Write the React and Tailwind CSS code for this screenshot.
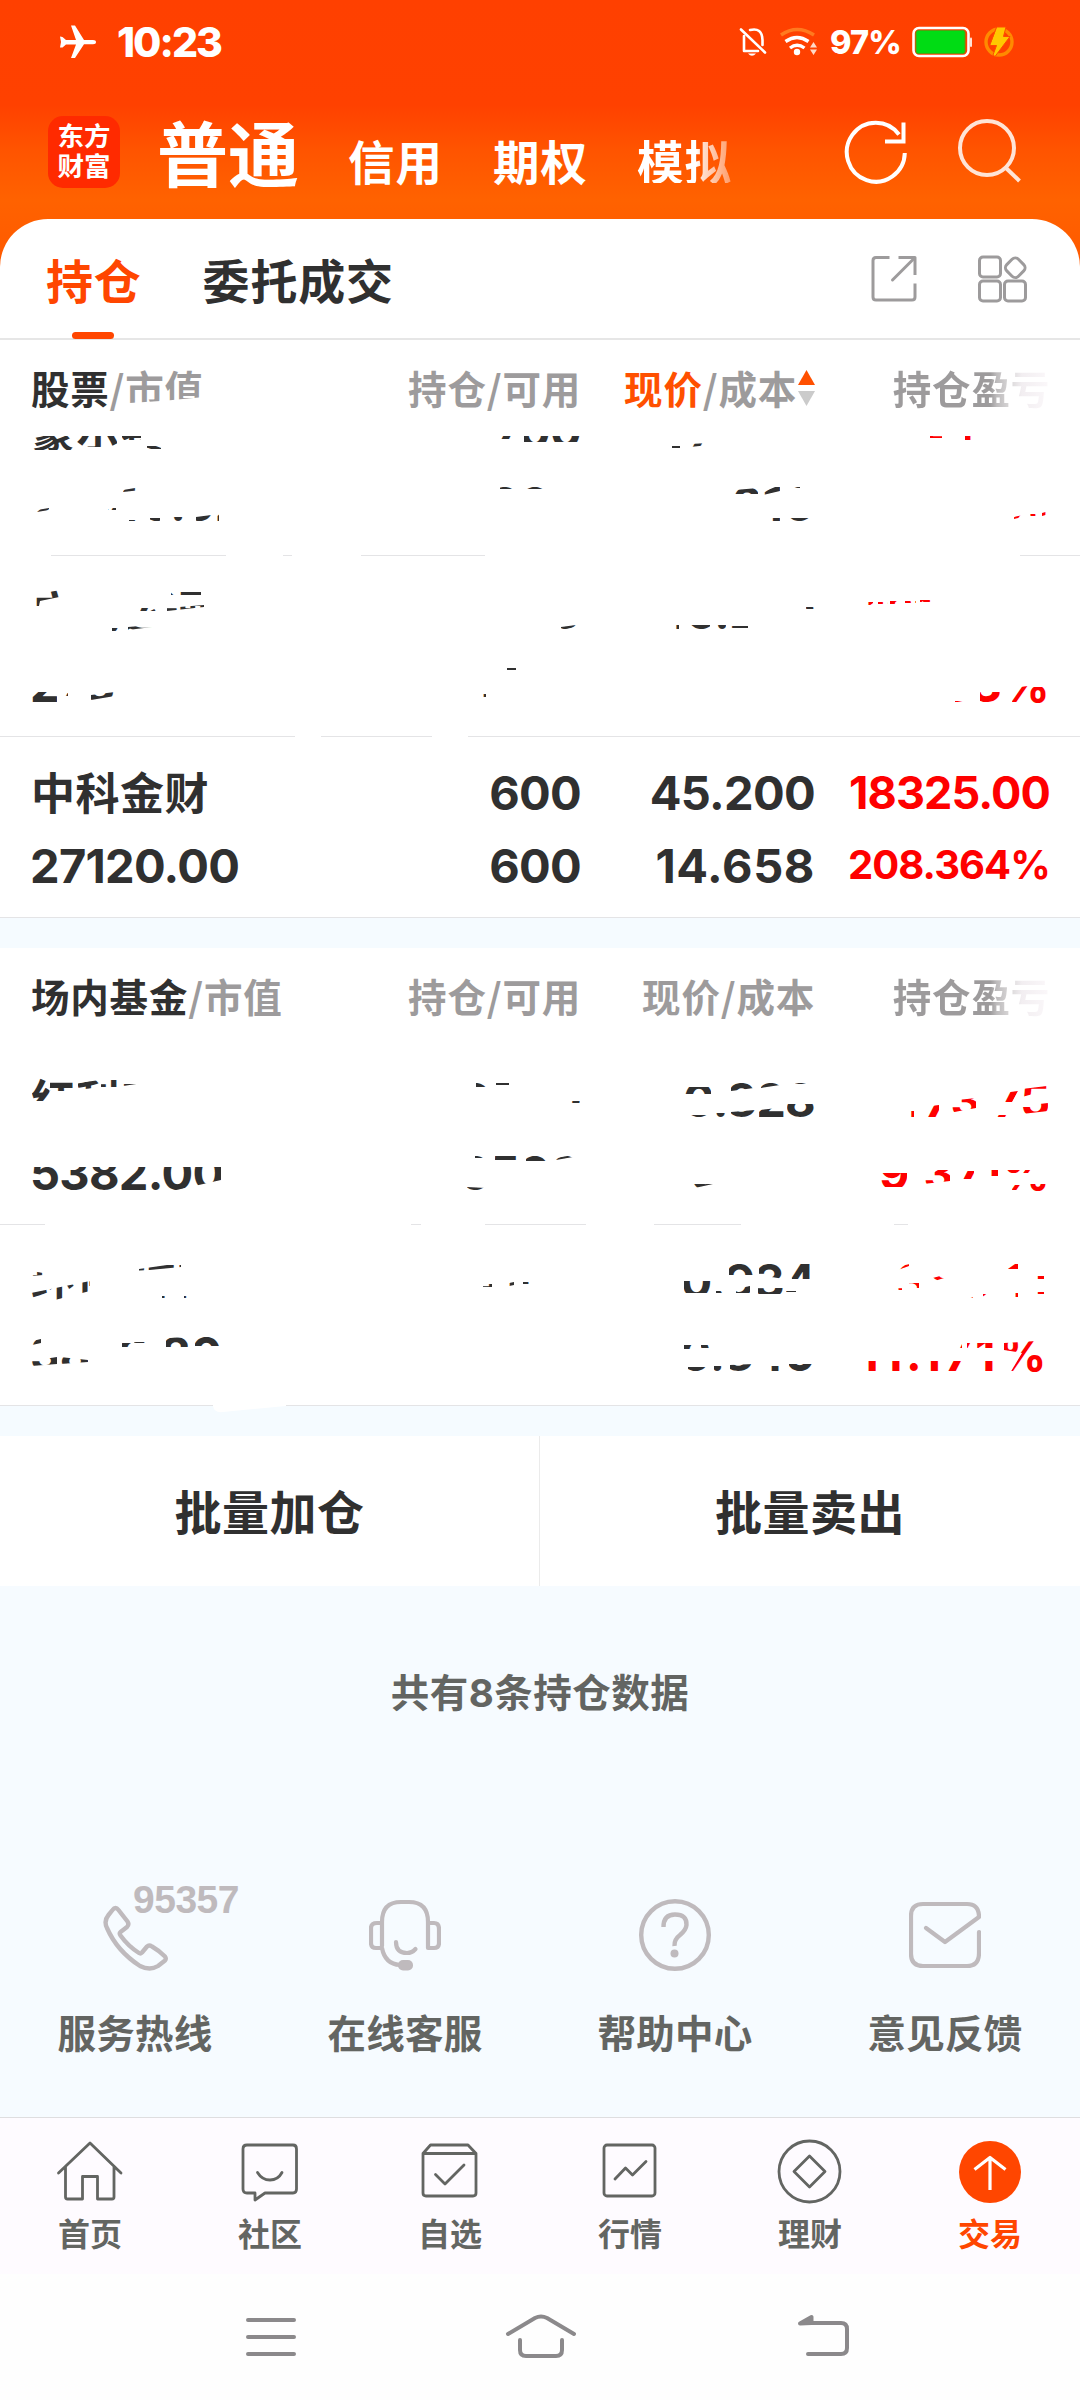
import React from "react";

const NUM = "font-['Inter','Noto_Sans_CJK_SC',sans-serif]";

/* Icon whose viewBox uses screen coordinates, so drawings share one grid. */
function Icon({ x, y, w, h, children, className = "", sw = 3 }) {
  return (
    <svg
      width={w}
      height={h}
      viewBox={`${x} ${y} ${w} ${h}`}
      className={`shrink-0 ${className}`}
      fill="none"
      stroke="currentColor"
      strokeWidth={sw}
      strokeLinecap="round"
      strokeLinejoin="round"
    >
      {children}
    </svg>
  );
}

function StatusBar() {
  return (
    <div className="flex h-[84px] items-center pl-[60px] pr-[65px] text-white">
      <Icon x={60} y={25} w={36} h={34}>
        <path
          fill="currentColor"
          stroke="none"
          d="M96 42Q96 44.2 93 44.2L84 44.2L75 58L71 58L76 44.4L66 44.4L62.5 47.5H60L61 42L60 36.5L62.5 37L66 40L76 40L71 25.5H75L84 40L93 40Q96 40 96 42Z"
        />
      </Icon>
      <span className={`ml-[21px] text-[41px] font-extrabold leading-none tracking-[-2px] ${NUM}`}>10:23</span>
      <div className="ml-auto flex items-center">
        <Icon x={737} y={27} w={30} h={32} sw={2.6}>
          <path d="M740 30.5L764 53.5" />
          <path d="M743 37V52H757M749 31Q761 28 761.500 41V46" />
          <path fill="currentColor" stroke="none" d="M747 54.500H755Q751 59 747 54.500Z" />
        </Icon>
        <Icon x={778} y={28} w={40} h={30} sw={3.4} className="ml-[11px]">
          <path stroke="#ff7a1f" strokeLinecap="butt" d="M780 36Q796 25 813 36" />
          <path strokeLinecap="butt" d="M784.500 42.500Q796 34.500 807.500 42.500M789 49Q796 43.500 803.500 49" />
          <circle cx="796" cy="53" r="3.200" fill="currentColor" stroke="none" />
          <path fill="#ffd9c7" stroke="none" d="M812.500 43L816 48.500H809ZM812.500 56L816 50.500H809Z" />
        </Icon>
        <span className={`ml-[11px] pt-[2px] text-[32.5px] font-extrabold leading-none tracking-[-0.8px] ${NUM}`}>97%</span>
        <Icon x={912} y={26} w={60} h={32} sw={2.6} className="ml-[11px]">
          <rect x="913.500" y="28" width="55" height="28" rx="5.500" />
          <rect x="916" y="30.500" width="49" height="23" rx="2" fill="#00dc14" stroke="#5a9a10" strokeWidth="1" />
          <path stroke="#ffe3d6" strokeWidth="2" d="M971 38.500V46" />
        </Icon>
        <Icon x={983} y={26} w={32} h={32} sw={3.4} className="ml-[11px]">
          <circle cx="999" cy="42" r="13" stroke="#ff8a00" />
          <path fill="#ffc800" stroke="#ff4a00" strokeWidth="1" d="M997 27H1006L1003.500 36.500H1010L995 56.500L993 55L996.500 45.500H990Z" />
        </Icon>
      </div>
    </div>
  );
}

function TopNav() {
  return (
    <div className="flex h-[135px] items-center pl-[48px] text-white">
      <div className="flex h-[72px] w-[72px] flex-col items-center justify-center rounded-[15px] bg-[#ff2a00] pb-[3px] text-[26.5px] font-bold leading-[30px]">
        <span>东方</span>
        <span>财富</span>
      </div>
      <span className="ml-[37px] pb-[4px] text-[71px] font-bold leading-[70px]">普通</span>
      <div className="flex pt-[17px] text-[46.5px] font-bold leading-[46px] tracking-[1px]">
        <span className="ml-[49px]">信用</span>
        <span className="ml-[50px]">期权</span>
        <span className="ml-[49px] bg-[linear-gradient(90deg,#fff_62%,#ffe2d2_68%,#ff9a66_100%)] bg-clip-text text-transparent">模拟</span>
      </div>
      <Icon x={843} y={118} w={68} h={68} sw={4} className="ml-auto">
        <path strokeLinecap="butt" strokeLinejoin="miter" d="M904.800 153A29 29.500 0 1 1 899 134.500M903.500 122.500V141.500H885" />
      </Icon>
      <Icon x={956} y={118} w={68} h={68} sw={4} className="ml-[45px] mr-[56px] text-[#ffe4d6]">
        <circle cx="987" cy="148" r="27" />
        <path strokeLinecap="butt" d="M1006 168L1019.500 181" />
      </Icon>
    </div>
  );
}

function PanelTabs() {
  return (
    <div className="flex h-[121px] items-center rounded-t-[48px] border-b-2 border-[#e6e6e6] bg-white pl-[46px] text-[47px] font-bold leading-none text-[#303030]">
      <div className="relative tracking-[0.8px] text-[#ff4600]">
        持仓
        <span className="absolute left-[26px] top-[77px] h-[7px] w-[42px] rounded-full bg-[#ff4600]" />
      </div>
      <span className="ml-[61px] tracking-[0.8px]">委托成交</span>
      <Icon x={869} y={254} w={50} h={50} sw={3} className="ml-auto text-[#9d9b9c]">
        <path strokeLinecap="butt" d="M889.500 257.500H876Q873 257.500 873 260.500V297Q873 300 876 300H912Q915 300 915 297V283.500M898.500 257.500H915V275" />
        <path d="M892.500 280L914 258.500" />
      </Icon>
      <Icon x={976} y={254} w={54} h={52} sw={3} className="ml-[57px] mr-[50px] text-[#9d9b9c]">
        <rect x="979.500" y="258" width="21" height="20" rx="3.500" />
        <rect x="979.500" y="282" width="21" height="20" rx="3.500" />
        <rect x="1004.500" y="282" width="21" height="20" rx="3.500" />
        <rect x="1007" y="260.500" width="16.500" height="16.500" rx="4.500" transform="rotate(45 1015.250 268.750)" />
      </Icon>
    </div>
  );
}

function TableHead({ title, sorted, tornLabel }) {
  return (
    <div className="grid h-[96px] grid-cols-[281px_300px_234px_235px] items-center whitespace-nowrap pb-[2px] text-right text-[38.5px] font-bold leading-none tracking-[0.8px] text-[#9d9b9c]">
      <div className="pl-[31px] text-left">
        <span className="text-[#303030]">{title}</span>/
        <span className={tornLabel ? "inline-block [clip-path:polygon(0_0,100%_0,100%_76%,50%_86%,0_92%)]" : ""}>市值</span>
      </div>
      <div>持仓/可用</div>
      {sorted ? (
        <div className="flex items-center justify-end">
          <span>
            <span className="text-[#ff5000]">现价</span>/成本
          </span>
          <span className="ml-[1px] flex flex-col gap-[6px] pt-[2px]">
            <Icon x={0} y={0} w={17} h={15}>
              <path d="M8.500 0L17 15H0Z" fill="#ff5000" stroke="none" />
            </Icon>
            <Icon x={0} y={0} w={17} h={15}>
              <path d="M0 0H17L8.500 15Z" fill="#cbcbcb" stroke="none" />
            </Icon>
          </span>
        </div>
      ) : (
        <div>现价/成本</div>
      )}
      <div>
        <span className="bg-[linear-gradient(90deg,#9d9b9c_62%,#bdbbbc_66%,#dedcdd_76%,#f2eef1_82%,#fbf8fa_100%)] bg-clip-text text-transparent">持仓盈亏</span>
      </div>
    </div>
  );
}

/* Boxes are [left, top, right, bottom]; longer lists are free polygons. */
function windowsToPath(list, top) {
  return list
    .map((p) => {
      const pts = p.length === 4 ? [p[0], p[1], p[2], p[1], p[2], p[3], p[0], p[3]] : p;
      let d = "";
      for (let i = 0; i < pts.length; i += 2) d += `${i ? "L" : "M"}${pts[i]} ${pts[i + 1] - top}`;
      return d + "Z";
    })
    .join("");
}

function HoldingRow({ row }) {
  const clip = row.windows ? { clipPath: `path('${windowsToPath(row.windows, row.top)}')` } : undefined;
  const line = "grid h-[73px] grid-cols-[281px_300px_234px_235px] items-center whitespace-nowrap text-right leading-none";
  return (
    <div className="h-[180px] shrink-0 pt-[19px] font-bold text-[#303030]" style={clip}>
      <div className={line}>
        <div className="pb-[3px] pl-[31px] text-left text-[44px] tracking-[0.5px]">{row.name}</div>
        <div className={`text-[47px] tracking-[-0.7px] ${NUM}`}>{row.qty}</div>
        <div className={`text-[47px] tracking-[-0.7px] ${NUM}`}>{row.price}</div>
        <div className={`text-[#fe0000] ${row.profitStyle || "text-[47px] tracking-[-0.3px]"} ${NUM}`}>{row.profit}</div>
      </div>
      <div className={line}>
        <div className={`pl-[30px] text-left text-[47px] tracking-[-0.7px] ${NUM}`}>{row.value}</div>
        <div className={`text-[47px] tracking-[-0.7px] ${NUM}`}>{row.usable}</div>
        <div className={`text-[47px] ${row.costStyle || "tracking-[-0.7px]"} ${NUM}`}>{row.cost}</div>
        <div className={`text-[#fe0000] ${row.rateStyle || "text-[47px] tracking-[0.2px]"} ${NUM}`}>{row.rate}</div>
      </div>
    </div>
  );
}

function Rule({ parts }) {
  return (
    <svg width="1080" height="1" viewBox="0 0 1080 1" className="block h-px shrink-0">
      {parts.map(([a, b]) => (
        <rect key={a} x={a} y="0" width={b - a} height="1" fill="#e4e4e6" />
      ))}
    </svg>
  );
}

const STOCKS = [
  {
    top: 375, name: "豪尔赛", qty: "700", price: "27.200", profit: "2841.00",
    value: "21440.02", usable: "200", cost: "26.216", rate: "14.219%",
    costStyle: "tracking-[0.7px]",
    windows: [
      [32, 436, 76, 450], [77, 436, 117, 447], [122, 436, 141, 440], [147, 446, 161, 449],
      [501, 436, 516, 439], [524, 436, 580, 442], [672, 446, 680, 448], [690, 444, 709, 443, 709, 445, 690, 447],
      [930, 436, 942, 438], [965, 436, 975, 440],
      [123, 490, 141, 487, 141, 490, 123, 492], [108, 508, 116, 510], [37, 510, 49, 508, 49, 510, 37, 512],
      [129, 520, 140, 522], [150, 518, 160, 522], [167, 517, 188, 522], [196, 517, 219, 514, 219, 521, 196, 521],
      [500, 487, 516, 489], [527, 487, 545, 489],
      [735, 490, 758, 488, 758, 494, 735, 494], [763, 492, 780, 485, 780, 491, 763, 495], [790, 487, 800, 488],
      [772, 518, 780, 521], [790, 518, 811, 522],
      [1014, 517, 1023, 515, 1023, 517, 1014, 519], [1030, 514, 1037, 516], [1042, 513, 1049, 511, 1049, 514, 1042, 516],
    ],
  },
  {
    top: 556, name: "广电运通", qty: "1700", price: "16.270", profit: "18141.00",
    value: "27350.00", usable: "1700", cost: "16.133", rate: "25.933%",
    profitStyle: "text-[45px] tracking-[-0.9px]",
    windows: [
      [33, 589, 60, 589, 64, 596, 40, 601, 39, 606, 33, 606], [171, 592, 201, 595], [140, 608, 160, 611],
      [167, 608, 204, 605, 204, 607, 167, 611], [112, 628, 118, 631], [128, 627, 152, 625, 152, 627, 128, 630],
      [561, 627, 576, 625, 576, 627, 561, 630], [806, 607, 814, 609],
      [670, 625, 679, 629], [688, 625, 710, 629], [716, 625, 726, 629], [730, 626, 748, 628],
      [862, 602, 873, 605], [878, 602, 888, 604], [890, 601, 900, 604], [905, 601, 916, 603], [920, 600, 932, 602],
      [31, 692, 57, 703], [60, 693, 68, 696], [91, 695, 115, 692, 115, 696, 91, 700],
      [507, 668, 516, 670], [478, 694, 486, 697], [667, 669, 679, 671],
      [980, 692, 1002, 704], [955, 701, 968, 703], [1012, 688, 1028, 686, 1028, 703, 1012, 703], [1029, 687, 1050, 703],
    ],
  },
  {
    top: 737, name: "中科金财", qty: "600", price: "45.200", profit: "18325.00",
    value: "27120.00", usable: "600", cost: "14.658", rate: "208.364%",
    profitStyle: "text-[45px] tracking-[-0.9px]",
    costStyle: "tracking-[0.6px]",
    rateStyle: "text-[40px] tracking-[-0.9px] pb-[2px]",
  },
];

const FUNDS = [
  {
    top: 1044, name: "红利ETF", qty: "6500", price: "0.828", profit: "473.75",
    value: "5382.00", usable: "6500", cost: "0.757", rate: "9.371%",
    windows: [
      [32, 1078, 48, 1078, 50, 1094, 44, 1101, 32, 1101], [50, 1082, 73, 1091], [78, 1083, 100, 1080, 100, 1087, 78, 1090],
      [101, 1080, 117, 1087], [123, 1083, 143, 1082, 143, 1083, 123, 1086],
      [476, 1083, 486, 1087], [496, 1083, 509, 1085], [571, 1101, 580, 1103],
      [685, 1087, 711, 1094], [731, 1082, 754, 1082, 754, 1088, 731, 1091], [761, 1082, 780, 1082, 780, 1085, 761, 1088], [795, 1082, 806, 1084],
      [690, 1115, 709, 1119], [716, 1113, 726, 1119], [731, 1112, 755, 1110, 755, 1119, 731, 1119],
      [759, 1110, 785, 1107, 785, 1119, 759, 1119], [787, 1104, 815, 1119],
      [905, 1111, 914, 1118], [924, 1107, 939, 1105, 939, 1118, 924, 1118], [949, 1101, 976, 1098, 976, 1108, 949, 1113],
      [1003, 1093, 1018, 1091, 1012, 1102, 1003, 1102], [1022, 1089, 1047, 1086, 1047, 1090, 1022, 1097],
      [1022, 1106, 1048, 1103, 1048, 1111, 1022, 1114], [997, 1115, 1007, 1117],
      [32, 1167, 32, 1192, 172, 1191, 221, 1180, 221, 1167],
      [475, 1156, 486, 1158], [495, 1156, 518, 1160], [526, 1155, 549, 1161], [556, 1158, 573, 1155, 573, 1157, 556, 1160],
      [467, 1187, 486, 1188, 486, 1192, 467, 1192], [690, 1184, 713, 1184, 690, 1189],
      [880, 1173, 907, 1187], [923, 1179, 938, 1170, 950, 1170, 950, 1181, 923, 1184], [960, 1171, 974, 1179], [989, 1170, 998, 1176],
      [1007, 1170, 1033, 1173], [1012, 1185, 1022, 1191], [1030, 1184, 1049, 1191],
    ],
  },
  {
    top: 1225, name: "环保ETF", qty: "4100", price: "0.934", profit: "385.11",
    value: "3829.80", usable: "4100", cost: "0.840", rate: "11.171%",
    profitStyle: "text-[47px] tracking-[2px]",
    rateStyle: "text-[47px] tracking-[3.4px]",
    windows: [
      [32, 1271, 43, 1273, 43, 1275, 32, 1276], [31, 1293, 90, 1281, 90, 1291, 70, 1296, 55, 1300, 31, 1299],
      [139, 1269, 181, 1263, 181, 1267, 139, 1271], [184, 1263, 192, 1265], [162, 1296, 171, 1298], [184, 1296, 192, 1298],
      [483, 1284, 492, 1287], [504, 1284, 514, 1282, 514, 1285, 504, 1287], [523, 1282, 532, 1284],
      [684, 1281, 711, 1293], [729, 1263, 755, 1263, 755, 1275, 729, 1275], [759, 1263, 784, 1263, 784, 1279, 759, 1275], [786, 1263, 810, 1263, 810, 1279, 792, 1279],
      [716, 1291, 724, 1293], [736, 1289, 750, 1286, 750, 1293, 736, 1293], [758, 1288, 784, 1294], [786, 1291, 796, 1292],
      [895, 1267, 909, 1263, 909, 1266, 895, 1271], [925, 1280, 944, 1275, 944, 1278, 925, 1284], [909, 1283, 919, 1288], [893, 1287, 902, 1290],
      [961, 1297, 973, 1299], [983, 1294, 992, 1298], [1008, 1264, 1018, 1269], [1010, 1293, 1018, 1297], [1036, 1276, 1044, 1279], [1036, 1292, 1044, 1294],
      [32, 1341, 41, 1339, 41, 1343, 32, 1345], [122, 1343, 131, 1347], [134, 1342, 146, 1343], [166, 1338, 190, 1337, 190, 1347, 166, 1347], [195, 1336, 221, 1346],
      [31, 1361, 57, 1357, 57, 1364, 31, 1366], [60, 1357, 88, 1360, 88, 1362, 60, 1364],
      [684, 1345, 693, 1349], [701, 1345, 710, 1348], [688, 1367, 709, 1373], [714, 1366, 724, 1373], [730, 1365, 754, 1364, 754, 1373, 730, 1373],
      [771, 1366, 780, 1372], [789, 1364, 814, 1373],
      [866, 1361, 1000, 1373], [950, 1344, 962, 1348], [967, 1343, 999, 1348],
      [1004, 1343, 1037, 1341, 1050, 1355, 1050, 1373, 1010, 1373, 1022, 1353, 1004, 1350],
    ],
  },
];

function Service({ label, children, badge }) {
  return (
    <div className="relative flex w-[270px] flex-col items-center">
      <div className="flex h-[72px] items-center text-[#bfbabd]">{children}</div>
      {badge && (
        <span className="absolute left-[133px] top-[-19px] font-['Liberation_Sans',sans-serif] text-[39px] font-bold leading-none tracking-[-0.5px] text-[#bfbabd]">
          {badge}
        </span>
      )}
      <span className="mt-[40px] text-[38.5px] font-bold leading-[40px] tracking-[0.3px] text-[#636562]">{label}</span>
    </div>
  );
}

function Tab({ label, active, children }) {
  return (
    <div className={`flex w-[180px] flex-col items-center ${active ? "text-[#ff4600]" : "text-[#636562]"}`}>
      <div className="flex h-[66px] items-center">{children}</div>
      <span className="mt-[11px] text-[32px] font-bold leading-[34px]">{label}</span>
    </div>
  );
}

export default function App() {
  return (
    <div className="flex h-[2400px] w-[1080px] flex-col overflow-hidden bg-white font-['Noto_Sans_CJK_SC',sans-serif]">
      <header className="bg-[linear-gradient(180deg,#ff4000_0px,#ff4100_105px,#ff5400_150px,#ff6200_200px,#ff5a00_260px)]">
        <StatusBar />
        <TopNav />
        <PanelTabs />
      </header>

      <section>
        <TableHead title="股票" sorted tornLabel />
        <div className="flex h-[119px] flex-col justify-end overflow-hidden">
          <HoldingRow row={STOCKS[0]} />
        </div>
        <Rule parts={[[51, 226], [283, 292], [361, 485], [1020, 1080]]} />
        <HoldingRow row={STOCKS[1]} />
        <Rule parts={[[0, 295], [321, 432], [468, 1080]]} />
        <HoldingRow row={STOCKS[2]} />
        <Rule parts={[[0, 1080]]} />
      </section>

      <div className="h-[30px] shrink-0 bg-[#f5fbff]" />

      <section>
        <TableHead title="场内基金" />
        <HoldingRow row={FUNDS[0]} />
        <Rule parts={[[0, 45], [411, 421], [485, 586], [654, 741], [894, 908]]} />
        <HoldingRow row={FUNDS[1]} />
        <Rule parts={[[0, 213], [286, 1080]]} />
      </section>

      <div className="h-[30px] shrink-0 bg-[#f5fbff] pl-[213px]">
        <Icon x={0} y={0} w={73} h={7} className="block">
          <path d="M0 0H73L10 6Q1 7 0 0Z" fill="#fff" stroke="none" />
        </Icon>
      </div>

      <div className="grid h-[150px] shrink-0 grid-cols-2 items-center text-center text-[47px] font-bold leading-[148px] tracking-[0.5px] text-[#303030]">
        <div className="h-[150px] border-r border-[#ebebeb]">批量加仓</div>
        <div className="h-[150px]">批量卖出</div>
      </div>

      <div className="flex h-[531px] shrink-0 flex-col bg-[#f6fbff]">
        <div className="mt-[83px] text-center text-[38.5px] font-bold leading-[42px] tracking-[0.5px] text-[#636562]">
          共有<span className={NUM}>8</span>条持仓数据
        </div>
        <div className="mt-[185px] flex">
          <Service label="服务热线" badge="95357">
            <Icon x={99} y={1898} w={72} h={72} sw={4.4}>
              <path d="M112.500 1909Q115.500 1905 118.500 1909L127.500 1920.500Q129.500 1923.500 127 1926L120.500 1931Q119 1932.500 120.500 1934.500Q128 1945 139 1952Q140.500 1953 142 1951.500L147 1945.500Q149 1943.500 152 1945.500Q159 1949.500 165 1955.500Q166.500 1957.500 165 1959.500L158 1965Q150 1970 140 1965Q117 1950 107 1927Q103.500 1920 108.500 1914Z" />
            </Icon>
          </Service>
          <Service label="在线客服">
            <Icon x={369} y={1898} w={72} h={72} sw={4.2}>
              <path d="M382 1945V1921Q382 1901 401 1901H409Q428 1901 428 1921V1947H434Q439 1947 439 1942V1928Q439 1922 434 1922H429M382 1922H377Q371 1922 371 1927V1942Q371 1947 376 1947H382Q385 1963 400 1964" />
              <rect x="398" y="1959" width="15" height="10.500" rx="5" fill="currentColor" stroke="none" />
              <path d="M396 1941Q396 1952 407 1952Q412 1952 415.500 1948" />
            </Icon>
          </Service>
          <Service label="帮助中心">
            <Icon x={639} y={1898} w={72} h={72} sw={4.4}>
              <circle cx="675" cy="1934" r="33.800" />
              <path strokeLinecap="butt" d="M663.500 1926Q663.500 1913.500 675 1913.500Q687 1913.500 686.500 1924Q686 1929 680 1934Q674 1938.500 674.500 1945" />
              <circle cx="674.500" cy="1952.500" r="4" fill="currentColor" stroke="none" />
            </Icon>
          </Service>
          <Service label="意见反馈">
            <Icon x={909} y={1898} w={72} h={72} sw={4.2}>
              <path d="M979 1931V1952Q979 1965 967 1965H923Q911 1965 911 1953V1915Q911 1903 923 1903H967Q979 1903 979 1916L945 1941L926 1927" />
            </Icon>
          </Service>
        </div>
      </div>

      <nav className="flex h-[157px] shrink-0 border-t border-[#dfdee0] bg-[#fefbff] pt-[20px]">
        <Tab label="首页">
          <Icon x={54} y={2138} w={72} h={66} sw={2.8}>
            <path d="M58.500 2173L90 2143L121 2173M65.500 2167V2197Q65.500 2199 67.500 2199H82.500V2176.500H97.500V2199H112Q114 2199 114 2197V2167" />
          </Icon>
        </Tab>
        <Tab label="社区">
          <Icon x={234} y={2138} w={72} h={66} sw={2.8}>
            <path d="M247 2145H293Q296.500 2145 296.500 2149V2189Q296.500 2193 293 2193H265L255 2200V2193H247Q243 2193 243 2189V2149Q243 2145 247 2145Z" />
            <path d="M257.500 2172.500Q262 2180 270 2180Q278 2180 282 2172.500" />
          </Icon>
        </Tab>
        <Tab label="自选">
          <Icon x={414} y={2138} w={72} h={66} sw={2.8}>
            <path d="M423 2153.500H476V2193Q476 2196 473 2196H426Q423 2196 423 2193V2153.500L430.500 2145H468L476 2153.500M435.500 2174.500L445 2184L464 2165" />
          </Icon>
        </Tab>
        <Tab label="行情">
          <Icon x={594} y={2138} w={72} h={66} sw={2.8}>
            <rect x="604" y="2145" width="51" height="51" rx="3" />
            <path d="M615 2179L625.500 2168L632.500 2175L646 2161.500" />
          </Icon>
        </Tab>
        <Tab label="理财">
          <Icon x={774} y={2138} w={72} h={66} sw={2.8}>
            <circle cx="809.500" cy="2171.500" r="30.500" />
            <path d="M809.500 2156L825 2171.500L809.500 2187L794 2171.500Z" />
          </Icon>
        </Tab>
        <Tab label="交易" active>
          <Icon x={954} y={2138} w={72} h={66} sw={3.2}>
            <circle cx="990" cy="2172" r="31" fill="currentColor" stroke="none" />
            <path stroke="#fff" strokeLinecap="butt" d="M990 2190V2157.500M974.500 2169.500L990 2157.500L1005.500 2169.500" />
          </Icon>
        </Tab>
      </nav>

      <div className="flex h-[126px] shrink-0 items-center bg-[#fefefe] pl-[244px] text-[#8b898b]">
        <Icon x={244} y={2312} w={54} h={50} sw={4}>
          <path d="M248 2320H294M248 2337H294M248 2354H294" />
        </Icon>
        <Icon x={504} y={2312} w={74} h={50} sw={4} className="ml-[206px]">
          <path d="M508 2334L535 2318Q541 2315 547 2318L574 2334M520 2340V2350Q520 2356 526 2356H556Q562 2356 562 2350V2340" />
        </Icon>
        <Icon x={796} y={2312} w={56} h={50} sw={4} className="ml-[218px]">
          <path d="M802 2323H841Q847 2323 847 2329V2348Q847 2354 841 2354H808" />
          <path d="M800 2323.500L811.500 2317V2323Z" fill="currentColor" />
        </Icon>
      </div>
    </div>
  );
}
